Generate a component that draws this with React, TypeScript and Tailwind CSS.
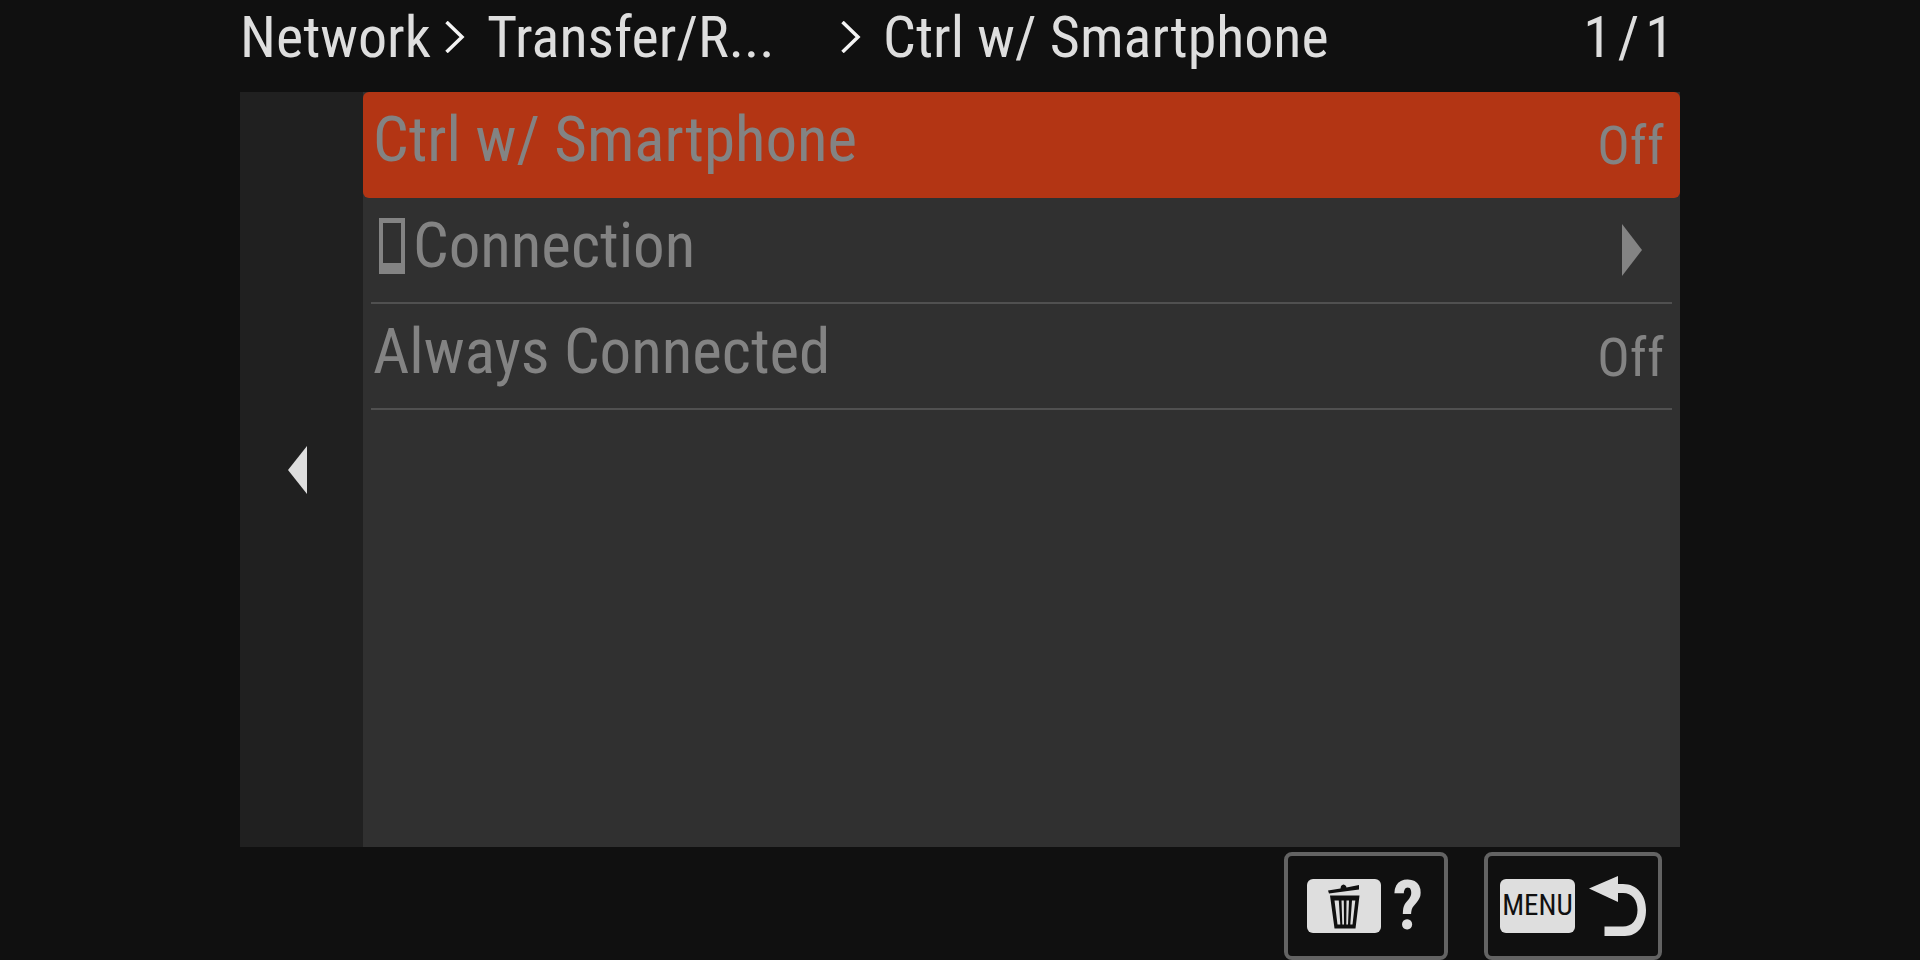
import type { ReactNode } from 'react';

function Chevron() {
  return (
    <svg aria-hidden="true" className="h-8 w-5 shrink-0" viewBox="0 0 20 32" fill="none">
      <path d="M1.500 1 L17 16 L1.500 31" stroke="#f4f4f4" strokeWidth="3.500" />
    </svg>
  );
}

function PhoneIcon() {
  return (
    <svg aria-hidden="true" className="h-14 w-[26px]" viewBox="0 0 26 56">
      <path fillRule="evenodd" fill="#838383" d="M0 0H26V56H0ZM4 5V45H22V5Z" />
    </svg>
  );
}

function TrashIcon() {
  return (
    <svg aria-hidden="true" className="h-[45px] w-8" viewBox="0 0 32 45">
      <path fill="#101010" d="M0 6.500 L12.500 4.500 L13 2 Q15.500 -1 18 2 L18.500 3.500 L31 1 V5.500 L1 9.500 Z" />
      <path
        fill="#101010"
        fillRule="evenodd"
        d="M2 11.500H31.500L27.500 44.500H6.500ZM6.500 16.500L9.500 40.500H12.300L10.800 16.500ZM13.500 16.500L14.300 40.500H16L15.800 16.500ZM18.500 16.500L18.300 40.500H20L21 16.500ZM24 16.500L22.300 40.500H24.500L27.300 16.500Z"
      />
    </svg>
  );
}

function ReturnIcon() {
  return (
    <svg aria-hidden="true" className="h-[60px] w-[57px] shrink-0" viewBox="0 0 57 60">
      <path
        fill="#dedede"
        d="M0 12.500 L29 0 V8 H34 C48 8 57 19 57 34 C57 49 49 60 36 60 H15.500 V50.500 H34 C43 50.500 48.500 44 48.500 34 C48.500 24 43 17 34 17 H29 V26 Z"
      />
    </svg>
  );
}

function Row({ label, icon, selected, children }: {
  label: string;
  icon?: ReactNode;
  selected?: boolean;
  children: ReactNode;
}) {
  return (
    <li>
      <button
        type="button"
        className={
          selected
            ? 'block h-[106px] w-full rounded-md bg-[#b33514] px-2 text-left'
            : 'block h-[106px] w-full px-2 text-left'
        }
      >
        <span
          className={
            selected
              ? 'flex h-full justify-between'
              : 'flex h-full justify-between border-b-2 border-[#505050]'
          }
        >
          <span className="flex h-24 items-center gap-2 pl-0.5">
            {icon && <span className="pl-1.5">{icon}</span>}
            <span className="text-[63px] leading-[96px]">{label}</span>
          </span>
          {children}
        </span>
      </button>
    </li>
  );
}

function Value({ children }: { children: ReactNode }) {
  return <span className="pr-2 text-[54px] leading-[108px]">{children}</span>;
}

export default function App() {
  return (
    <div className="min-h-screen bg-[#101010] font-['Roboto_Condensed','Liberation_Sans',sans-serif] text-[#dedede]">
      <div className="mx-auto flex min-h-screen w-3/4 flex-col">
        <header className="flex h-[92px] items-start justify-between pr-1.5 text-[58px] leading-[74px]">
          <nav aria-label="Breadcrumb" className="flex whitespace-nowrap">
            <div className="flex w-[247px] items-center gap-[14px]">
              <span>Network</span>
              <Chevron />
            </div>
            <div className="flex w-[396px] items-center justify-between pr-[22px]">
              <span>Transfer/R...</span>
              <Chevron />
            </div>
            <span>Ctrl w/ Smartphone</span>
          </nav>
          <p className="flex gap-1.5">
            <span>1</span>
            <span>/</span>
            <span>1</span>
          </p>
        </header>

        <main className="flex flex-1">
          <aside className="flex w-[123px] shrink-0 items-center justify-center bg-[#202020]">
            <button type="button" aria-label="Back" className="pr-2">
              <svg aria-hidden="true" className="h-12 w-5" viewBox="0 0 20 48">
                <path d="M19 0V48L0 24Z" fill="#dedede" />
              </svg>
            </button>
          </aside>
          <ul className="flex-1 bg-[#303030] text-[#838383]">
            <Row label="Ctrl w/ Smartphone" selected>
              <Value>Off</Value>
            </Row>
            <Row label="Connection" icon={<PhoneIcon />}>
              <span className="flex items-center pr-[30px]">
                <svg aria-hidden="true" className="h-[52px] w-5" viewBox="0 0 20 52">
                  <path d="M0 0V52L20 26Z" fill="#838383" />
                </svg>
              </span>
            </Row>
            <Row label="Always Connected">
              <Value>Off</Value>
            </Row>
          </ul>
        </main>

        <footer className="flex h-[113px] items-start justify-end gap-9 pr-[18px] pt-[5px]">
          <button
            type="button"
            aria-label="Help"
            className="flex h-[108px] w-[164px] items-center justify-center gap-3 rounded-lg border-4 border-[#636363] pr-0.5"
          >
            <span className="flex h-[54px] w-[74px] items-center justify-center rounded-md bg-[#dedede]">
              <TrashIcon />
            </span>
            <span className="text-[68px] font-bold leading-[100px]">?</span>
          </button>
          <button
            type="button"
            aria-label="Menu back"
            className="flex h-[108px] w-[178px] items-center justify-center gap-3.5 rounded-lg border-4 border-[#636363]"
          >
            <span className="flex h-[54px] w-[75px] items-center justify-center rounded-md bg-[#dedede] text-[29px] text-[#101010]">
              MENU
            </span>
            <ReturnIcon />
          </button>
        </footer>
      </div>
    </div>
  );
}
